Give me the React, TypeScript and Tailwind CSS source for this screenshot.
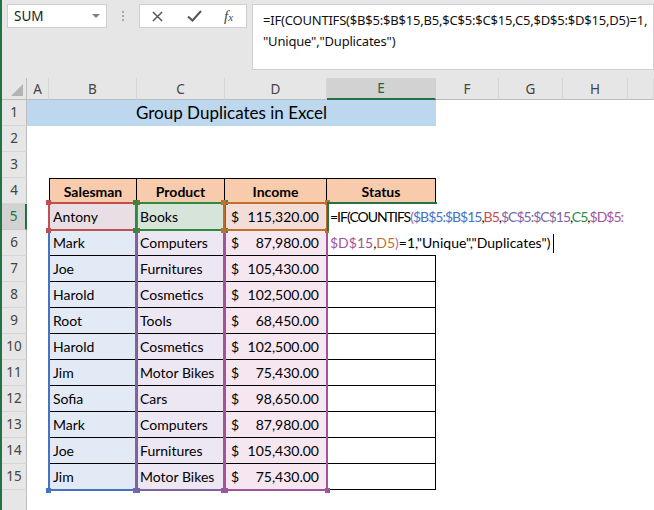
import clsx from "clsx";

const GRID =
  "grid h-[26px] grid-cols-[25px_22px_88px_88px_102px_109px_63px_64px_65px_1fr]";

const rows: [string, string, string][] = [
  ["Antony", "Books", "115,320.00"],
  ["Mark", "Computers", "87,980.00"],
  ["Joe", "Furnitures", "105,430.00"],
  ["Harold", "Cosmetics", "102,500.00"],
  ["Root", "Tools", "68,450.00"],
  ["Harold", "Cosmetics", "102,500.00"],
  ["Jim", "Motor Bikes", "75,430.00"],
  ["Sofia", "Cars", "98,650.00"],
  ["Mark", "Computers", "87,980.00"],
  ["Joe", "Furnitures", "105,430.00"],
  ["Jim", "Motor Bikes", "75,430.00"],
];

const columns = ["A", "B", "C", "D", "E", "F", "G", "H", ""];

function RowHead({ n, active }: { n?: number; active?: boolean }) {
  return (
    <div
      className={clsx(
        "flex items-center justify-center border-b text-[13.5px] [font-family:'Noto_Sans',sans-serif]",
        active
          ? "border-r-2 border-b-[#c8c8c8] border-r-[#217346] bg-[#d2d2d2] text-[#217346]"
          : "border-r border-b-[#d6d6d6] border-r-[#bdbdbd] bg-[#e6e6e6] text-[#444]",
      )}
    >
      {n}
    </div>
  );
}

// corner handles of a formula reference range
function Handles({ color }: { color: string }) {
  const base = clsx("absolute h-[5px] w-[5px]", color);
  return (
    <>
      <span className={clsx(base, "-left-[4px] -top-[4px]")} />
      <span className={clsx(base, "-right-[4px] -top-[4px]")} />
      <span className={clsx(base, "-bottom-[4px] -left-[4px]")} />
      <span className={clsx(base, "-bottom-[4px] -right-[4px]")} />
    </>
  );
}

function DataRow({ n, row }: { n: number; row: [string, string, string] }) {
  const first = n === 5;
  return (
    <div className={GRID}>
      <RowHead n={n} active={first} />
      <div />
      <div
        className={clsx(
          "flex items-center border-b border-l border-r border-black pl-[3px]",
          first ? "bg-[#e9dee3]" : "bg-[#e2eaf6]",
        )}
      >
        {row[0]}
      </div>
      <div
        className={clsx(
          "flex items-center border-b border-r border-black pl-[3px]",
          first ? "bg-[#d6e4da]" : "bg-[#ede6f3]",
        )}
      >
        {row[1]}
      </div>
      <div
        className={clsx(
          "flex items-center justify-between border-b border-r border-black pl-[6px] pr-[7px]",
          first ? "bg-[#f2ddd8]" : "bg-[#f6e6f0]",
        )}
      >
        <span>$</span>
        <span>{row[2]}</span>
      </div>
      <div className="border-b border-r border-black bg-white" />
    </div>
  );
}

export default function App() {
  return (
    <div className="flex h-[510px] w-[654px] overflow-hidden bg-white text-black">
      {/* window edge */}
      <div className="w-[2px] shrink-0 bg-[#217346]" />

      <div className="flex min-w-0 flex-1 flex-col">
        {/* name box + formula bar */}
        <div className="flex h-[78px] shrink-0 items-start bg-[#e6e6e6] pl-[5px] pt-[4px] [font-family:'Noto_Sans',sans-serif]">
          <div className="flex h-[24px] w-[100px] shrink-0 items-center border border-[#cfcfcf] bg-white pl-[6px] text-[13.5px] text-[#222]">
            SUM
            <span className="ml-auto mr-[6px] h-0 w-0 border-x-[4px] border-t-[4px] border-x-transparent border-t-[#808080]" />
          </div>
          <div className="flex h-[24px] w-[32px] shrink-0 flex-col items-center justify-center gap-[2px]">
            <span className="h-[2px] w-[2px] bg-[#a8a8a8]" />
            <span className="h-[2px] w-[2px] bg-[#a8a8a8]" />
            <span className="h-[2px] w-[2px] bg-[#a8a8a8]" />
          </div>
          <div className="flex h-[24px] w-[108px] shrink-0 items-center border border-[#cfcfcf] bg-white">
            <svg className="ml-[12px] h-[11px] w-[11px]" viewBox="0 0 12 12">
              <path d="M1 1 L11 11 M11 1 L1 11" stroke="#555" strokeWidth="1.6" fill="none" />
            </svg>
            <svg className="ml-[24px] h-[12px] w-[15px]" viewBox="0 0 15 12">
              <path d="M1 6.5 L5.5 10.5 L14 1" stroke="#555" strokeWidth="2" fill="none" />
            </svg>
            <span className="ml-[22px] text-[15px] italic text-[#444] [font-family:'Liberation_Serif',serif]">
              f<span className="text-[11px]">x</span>
            </span>
          </div>
          <div className="ml-[5px] h-[66px] min-w-0 flex-1 overflow-hidden border border-[#cfcfcf] bg-white pl-[10px] pt-[5px] text-[13px] leading-[21px] tracking-[-0.2px] text-[#111]">
            <div className="whitespace-nowrap">
              =IF(COUNTIFS($B$5:$B$15,B5,$C$5:$C$15,C5,$D$5:$D$15,D5)=1,
            </div>
            <div>"Unique","Duplicates")</div>
          </div>
        </div>

        {/* column headers */}
        <div className="grid h-[22px] shrink-0 grid-cols-[25px_22px_88px_88px_102px_109px_63px_64px_65px_1fr] bg-[#e6e6e6] text-[13.5px] text-[#444] [font-family:'Noto_Sans',sans-serif]">
          <div className="relative border-b border-r border-[#bdbdbd]">
            <svg className="absolute bottom-[3px] right-[3px] h-[12px] w-[12px]" viewBox="0 0 12 12">
              <polygon points="12,0 12,12 0,12" fill="#b4b4b4" />
            </svg>
          </div>
          {columns.map((c) =>
            c === "E" ? (
              <div
                key={c}
                className="flex items-center justify-center border-b-2 border-r border-b-[#217346] border-r-[#d0d0d0] bg-[#d2d2d2] text-[#2c5e3f]"
              >
                {c}
              </div>
            ) : (
              <div
                key={c || "I"}
                className="flex items-center justify-center border-b border-r border-b-[#bdbdbd] border-r-[#d6d6d6]"
              >
                {c}
              </div>
            ),
          )}
        </div>

        {/* sheet body */}
        <div className="relative flex-1 text-[14px] [font-family:Lato,sans-serif]">
          <div className={GRID}>
            <RowHead n={1} />
            <div className="col-span-5 flex items-center justify-center bg-[#bdd7ee] text-[17px]">
              Group Duplicates in Excel
            </div>
          </div>
          <div className={GRID}>
            <RowHead n={2} />
          </div>
          <div className={GRID}>
            <RowHead n={3} />
          </div>
          <div className={GRID}>
            <RowHead n={4} />
            <div />
            {["Salesman", "Product", "Income", "Status"].map((h, i) => (
              <div
                key={h}
                className={clsx(
                  "flex items-center justify-center border-b border-r border-t border-black bg-[#f8cbad] font-bold",
                  i === 0 && "border-l",
                )}
              >
                {h}
              </div>
            ))}
          </div>
          {rows.map((r, i) => (
            <DataRow key={i} n={i + 5} row={r} />
          ))}
          <div className={GRID}>
            <RowHead />
          </div>

          {/* reference ranges of the formula being edited */}
          <div className="absolute left-[46px] top-[102px] h-[289px] w-[90px] border-2 border-[#4472c4]">
            <Handles color="bg-[#4472c4]" />
          </div>
          <div className="absolute left-[133px] top-[102px] h-[289px] w-[91px] border-2 border-[#8064a2]">
            <Handles color="bg-[#8064a2]" />
          </div>
          <div className="absolute left-[221px] top-[102px] h-[289px] w-[105px] border-2 border-[#a2539a]">
            <Handles color="bg-[#a2539a]" />
          </div>
          <div className="absolute left-[46px] top-[102px] h-[29px] w-[90px] border-2 border-[#c0504d]">
            <Handles color="bg-[#c0504d]" />
          </div>
          <div className="absolute left-[133px] top-[102px] h-[29px] w-[91px] border-2 border-[#2e8b3e]">
            <Handles color="bg-[#2e8b3e]" />
          </div>
          <div className="absolute left-[221px] top-[102px] h-[29px] w-[105px] border-2 border-[#c0702a]">
            <Handles color="bg-[#c0702a]" />
          </div>

          {/* active cell E5 */}
          <div className="absolute left-[325px] top-[102px] h-[29px] w-[110px] border-2 border-[#217346]" />

          {/* in-cell editor, text spills over to the right */}
          <div className="absolute left-[327px] right-0 top-[104px] h-[51px] bg-white pl-[1px] text-[14px] leading-[26px]">
            <div className="whitespace-nowrap tracking-[-1px]">
              =IF(COUNTIFS<span className="text-[#b064a8]">(</span>
              <span className="text-[#4472c4]">$B$5:$B$15</span>,
              <span className="text-[#c0504d]">B5</span>,
              <span className="text-[#8064a2]">$C$5:$C$15</span>,
              <span className="text-[#2e8b3e]">C5</span>,
              <span className="text-[#a2539a]">$D$5:</span>
            </div>
            <div className="flex items-center whitespace-nowrap">
              <span className="text-[#a2539a]">$D$15</span>,
              <span className="text-[#c0702a]">D5</span>
              <span className="text-[#b064a8]">)</span>=1,"Unique","Duplicates")
              <span className="ml-[2px] h-[19px] w-[1px] bg-black" />
            </div>
          </div>
        </div>
      </div>
    </div>
  );
}
